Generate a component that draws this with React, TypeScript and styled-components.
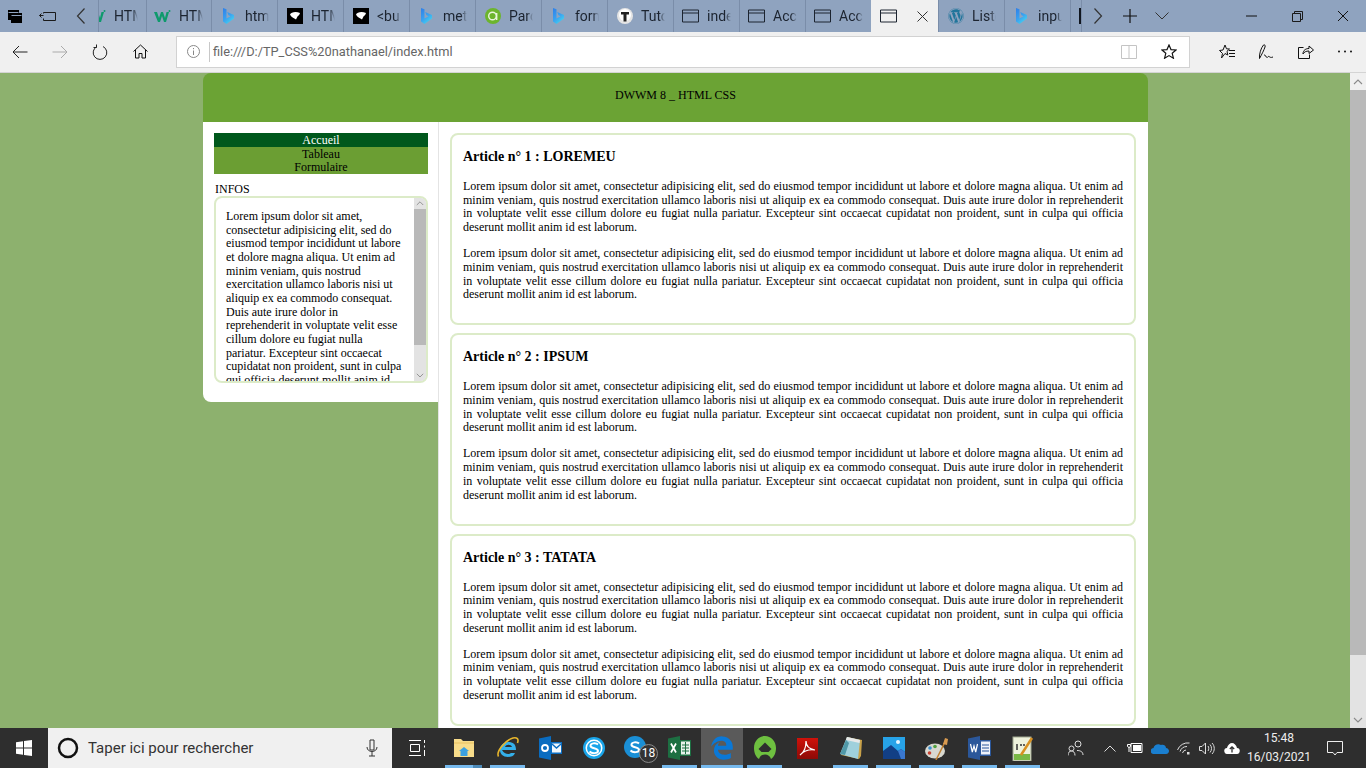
import * as React from 'react';
import styled, { createGlobalStyle } from 'styled-components';
import { FaWordpress, FaEdgeLegacy } from 'react-icons/fa';

const LOREM =
  'Lorem ipsum dolor sit amet, consectetur adipisicing elit, sed do eiusmod tempor incididunt ut labore et dolore magna aliqua. Ut enim ad minim veniam, quis nostrud exercitation ullamco laboris nisi ut aliquip ex ea commodo consequat. Duis aute irure dolor in reprehenderit in voluptate velit esse cillum dolore eu fugiat nulla pariatur. Excepteur sint occaecat cupidatat non proident, sunt in culpa qui officia deserunt mollit anim id est laborum.';

const GlobalStyle = createGlobalStyle`
  html, body {
    margin: 0;
    padding: 0;
    height: 768px;
    overflow: hidden;
  }
`;

const Screen = styled.div`
  width: 1366px;
  height: 768px;
  display: flex;
  flex-direction: column;
  font-family: Roboto, "Open Sans", sans-serif;
`;

/* browser chrome */
const TabBar = styled.div`
  height: 32px;
  flex: none;
  display: flex;
  background: #8fa3bf;
  color: #1c2430;
`;

const LeftTools = styled.div`
  width: 98px;
  flex: none;
  display: flex;
  align-items: center;
`;

const ChromeButton = styled.div<{ $w?: number }>`
  width: ${(p) => p.$w ?? 32}px;
  height: 100%;
  flex: none;
  display: flex;
  align-items: center;
  justify-content: center;
`;

const Tab = styled.div<{ $w?: number }>`
  width: ${(p) => p.$w ?? 66}px;
  flex: none;
  height: 32px;
  box-sizing: border-box;
  display: flex;
  align-items: center;
  justify-content: flex-end;
  gap: 8px;
  padding-right: 8px;
  overflow: hidden;
  border-left: 1px solid #7a8da9;
  font-size: 14px;
`;

const ActiveTab = styled.div`
  width: 67px;
  flex: none;
  height: 32px;
  box-sizing: border-box;
  display: flex;
  align-items: center;
  gap: 20px;
  padding-left: 9px;
  background: #f0f0f0;
`;

const TabIcon = styled.span`
  width: 17px;
  height: 17px;
  flex: none;
  display: flex;
  align-items: center;
  justify-content: center;
`;

const TabLabel = styled.span`
  width: 24px;
  flex: none;
  overflow: hidden;
  white-space: nowrap;
  -webkit-mask-image: linear-gradient(to right, #000 75%, transparent);
  mask-image: linear-gradient(to right, #000 75%, transparent);
`;

const Spacer = styled.div`
  flex: 1;
`;

const TabEnd = styled.div`
  width: 11px;
  flex: none;
  height: 32px;
  box-sizing: border-box;
  border-left: 1px solid #7a8da9;
  display: flex;
  align-items: center;
  justify-content: flex-end;
`;

const ScrollMark = styled.div`
  width: 2px;
  height: 16px;
  background: #10161f;
`;

const NextTabs = styled.div`
  width: 32px;
  flex: none;
  border-left: 1px solid #7a8da9;
  display: flex;
  align-items: center;
  justify-content: center;
`;

const ToolBar = styled.div`
  height: 41px;
  flex: none;
  box-sizing: border-box;
  display: flex;
  align-items: center;
  background: #f0f0f0;
  border-bottom: 1px solid #d4d4d4;
  padding-bottom: 1px;
`;

const NavIcons = styled.div`
  width: 176px;
  flex: none;
  display: flex;
`;

const NavButton = styled.div`
  width: 40px;
  height: 32px;
  display: flex;
  align-items: center;
  justify-content: center;
`;

const AddressBox = styled.div`
  width: 1014px;
  height: 32px;
  box-sizing: border-box;
  flex: none;
  display: flex;
  align-items: center;
  background: #fff;
  border: 1px solid #d2d2d2;
  color: #666;
  font-size: 12.8px;
`;

const InfoSlot = styled.div`
  width: 32px;
  height: 20px;
  flex: none;
  display: flex;
  align-items: center;
  justify-content: center;
  border-right: 1px solid #c8c8c8;
  margin-right: 3px;
`;

const AddressText = styled.span`
  flex: 1;
`;

const AddressAction = styled.div`
  width: 40px;
  display: flex;
  justify-content: center;
`;

const HubIcons = styled.div`
  flex: 1;
  display: flex;
  padding-left: 17px;
`;

const HubButton = styled.div`
  width: 39.5px;
  height: 32px;
  display: flex;
  align-items: center;
  justify-content: center;
`;

/* the page itself */
const PageArea = styled.div`
  flex: 1;
  min-height: 0;
  display: flex;
  background: #8db16e;
  font-family: "Liberation Serif", "Times New Roman", serif;
  color: #000;
  font-size: 12px;
  line-height: 13.67px;
`;

const Viewport = styled.div`
  flex: 1;
  min-width: 0;
  overflow: hidden;
`;

const Scrollbar = styled.div<{ $w: number }>`
  width: ${(p) => p.$w}px;
  flex: none;
  display: flex;
  flex-direction: column;
  background: #e3e3e3;
`;

const ScrollArrow = styled.div<{ $h: number; $bg: string }>`
  height: ${(p) => p.$h}px;
  flex: none;
  background: ${(p) => p.$bg};
  display: flex;
  align-items: center;
  justify-content: center;
`;

const ScrollThumb = styled.div<{ $h: number }>`
  height: ${(p) => p.$h}px;
  flex: none;
  background: #b9b9b9;
`;

const Wrapper = styled.div`
  width: 945px;
  margin-left: 203px;
  display: grid;
  grid-template-columns: 235px 1fr;
  grid-template-rows: 49px auto;
`;

const Header = styled.header`
  grid-column: 1 / 3;
  background: #6ba334;
  border-radius: 8px 8px 0 0;
  display: flex;
  align-items: center;
  justify-content: center;
  padding-bottom: 4px;
`;

const Sidebar = styled.aside`
  background: #fff;
  align-self: start;
  height: 280px;
  box-sizing: border-box;
  padding: 11px 10px 0 11px;
  border-radius: 0 0 0 8px;
`;

const Menu = styled.nav`
  display: flex;
  flex-direction: column;
  text-align: center;
`;

const MenuItem = styled.a<{ $current?: boolean }>`
  height: 13.67px;
  line-height: 15.6px;
  background: ${(p) => (p.$current ? '#00581c' : '#6b9e33')};
  color: ${(p) => (p.$current ? '#fff' : '#000')};
`;

const InfosTitle = styled.div`
  margin: 8px 0 0 1px;
  height: 14px;
  line-height: 15px;
`;

const InfosBox = styled.div`
  width: 214px;
  height: 187px;
  box-sizing: border-box;
  border: 2px solid #dcebc8;
  border-radius: 8px;
  overflow: hidden;
  display: flex;
  background: #fff;
`;

const InfosText = styled.div`
  flex: 1;
  min-width: 0;
  padding: 12px 10px 0;
`;

const Main = styled.main`
  background: #fff;
  border-left: 1px solid #e4e4e4;
  min-height: 671px;
  padding: 11px 12px 0 11px;
  display: flex;
  flex-direction: column;
  gap: 8px;
`;

const Article = styled.article`
  box-sizing: border-box;
  height: 192.3px;
  border: 2px solid #dcebc8;
  border-radius: 8px;
  padding: 14px 11px 0;
  text-align: justify;
`;

const ArticleTitle = styled.h2`
  margin: 0 0 15px;
  font-size: 14px;
  line-height: 16px;
  font-weight: bold;
`;

const Paragraph = styled.p`
  margin: 0 0 12.5px;
`;

/* taskbar */
const TaskBar = styled.div`
  height: 40px;
  flex: none;
  display: flex;
  background: #2e2e2e;
  color: #fff;
`;

const StartButton = styled.div`
  width: 48px;
  flex: none;
  display: flex;
  align-items: center;
  justify-content: center;
`;

const SearchBox = styled.div`
  width: 344px;
  flex: none;
  box-sizing: border-box;
  display: flex;
  align-items: center;
  background: #f0f0f0;
  color: #333;
  font-size: 15px;
  padding: 0 14px 0 9px;
  gap: 9px;
`;

const SearchText = styled.span`
  flex: 1;
`;

const TaskView = styled.div`
  width: 49px;
  flex: none;
  display: flex;
  align-items: center;
  justify-content: center;
`;

const AppSlot = styled.div<{ $w?: number; $running?: boolean; $active?: boolean }>`
  width: ${(p) => p.$w ?? 43}px;
  flex: none;
  position: relative;
  display: flex;
  align-items: center;
  justify-content: center;
  background: ${(p) => (p.$active ? '#5a5a5a' : 'transparent')};

  &::after {
    content: '';
    display: ${(p) => (p.$running ? 'block' : 'none')};
    position: absolute;
    left: ${(p) => (p.$active ? 0 : 4)}px;
    right: ${(p) => (p.$active ? 0 : 4)}px;
    bottom: 0;
    height: 3px;
    background: #76b9ed;
  }
`;

const StackedEdge = styled.span`
  position: absolute;
  right: 4px;
  bottom: 0;
  width: 9px;
  height: 3px;
  background: #4d8ab8;
  z-index: 1;
`;

const Badge = styled.span`
  position: absolute;
  right: 0;
  bottom: 5px;
  width: 19px;
  height: 19px;
  box-sizing: border-box;
  border-radius: 50%;
  border: 1px solid #8a8a8a;
  background: #333;
  color: #fff;
  font-size: 12px;
  line-height: 17px;
  text-align: center;
`;

const Tray = styled.div`
  flex: 1;
  display: flex;
  align-items: center;
  padding-left: 15px;
`;

const TrayIcon = styled.div<{ $w: number }>`
  width: ${(p) => p.$w}px;
  flex: none;
  display: flex;
  justify-content: center;
`;

const Clock = styled.div`
  width: 74px;
  flex: none;
  text-align: center;
  font-size: 12px;
  line-height: 19px;
  color: #eee;
`;

const Notify = styled.div`
  flex: 1;
  display: flex;
  justify-content: center;
  padding-right: 13px;
`;

/* favicons */
const BingIcon = () => (
  <svg width="11" height="16" viewBox="0 0 11 16">
    <defs>
      <linearGradient id="bing" x1="0" y1="0" x2="0.6" y2="1">
        <stop offset="0" stopColor="#2f7fe8" />
        <stop offset="0.6" stopColor="#3aa2f0" />
        <stop offset="1" stopColor="#45d0ee" />
      </linearGradient>
    </defs>
    <path d="M0 0l3.500 1.200v9.300l4-2.300-2-1L4.200 4 11 7v3.500L3.500 16 0 13.500z" fill="url(#bing)" />
  </svg>
);

const W3Icon = () => (
  <svg width="17" height="13" viewBox="0 0 17 13">
    <path d="M0 2h3l2 6 2-6h2l2 6 1.500-6H15l-3 10h-2L8 6l-2 6H4z" fill="#0e9a6c" />
    <circle cx="15.500" cy="1" r="1" fill="#0e9a6c" />
  </svg>
);

const PawIcon = () => (
  <svg width="16" height="16" viewBox="0 0 16 16">
    <rect width="16" height="16" fill="#000" />
    <path d="M3 6.500C4 4 9 3 13 5c-.5 2-1.500 2.500-2.500 3.500L9 11.500C7 10 4 9 3 6.500z" fill="#fff" />
  </svg>
);

const AltoIcon = () => (
  <svg width="16" height="16" viewBox="0 0 16 16">
    <circle cx="8" cy="8" r="8" fill="#6cb52d" />
    <circle cx="7.500" cy="8" r="3.800" fill="none" stroke="#e8f5dc" strokeWidth="1.400" />
    <rect x="11" y="5" width="1.400" height="7" fill="#e8f5dc" />
  </svg>
);

const TutoIcon = () => (
  <svg width="16" height="16" viewBox="0 0 16 16">
    <circle cx="8" cy="8" r="8" fill="#e4e4e4" />
    <circle cx="8" cy="7" r="6" fill="#fff" />
    <path d="M4 4h8v2.500H9.500v7h-3v-7H4z" fill="#222" />
  </svg>
);

const PageIcon = () => (
  <svg width="17" height="14" viewBox="0 0 17 14">
    <path d="M.5 1h16v12H.500zM.5 4h16" fill="none" stroke="#1c2430" />
  </svg>
);

const ChevronUp = ({ size }: { size: number }) => (
  <svg width={size} height={size * 0.6} viewBox="0 0 10 6">
    <path d="M1 5l4-4 4 4" fill="none" stroke="#8a8a8a" strokeWidth="1.100" />
  </svg>
);

const ChevronDown = ({ size }: { size: number }) => (
  <svg width={size} height={size * 0.6} viewBox="0 0 10 6">
    <path d="M1 1l4 4 4-4" fill="none" stroke="#8a8a8a" strokeWidth="1.100" />
  </svg>
);

type TabData = { icon: React.ReactNode; label: string; w?: number };

const tabs: TabData[] = [
  { icon: <W3Icon />, label: 'HTML', w: 48 },
  { icon: <W3Icon />, label: 'HTML', w: 65 },
  { icon: <BingIcon />, label: 'html' },
  { icon: <PawIcon />, label: 'HTML' },
  { icon: <PawIcon />, label: '<bu' },
  { icon: <BingIcon />, label: 'meta' },
  { icon: <AltoIcon />, label: 'Parc' },
  { icon: <BingIcon />, label: 'form' },
  { icon: <TutoIcon />, label: 'Tuto' },
  { icon: <PageIcon />, label: 'index' },
  { icon: <PageIcon />, label: 'Accu' },
  { icon: <PageIcon />, label: 'Accu' },
];

const line = { fill: 'none', stroke: '#1a1a1a', strokeWidth: 1 };

const SkypeS = ({ cy, color }: { cy: number; color: string }) => (
  <path
    d={`M15 ${cy - 3.500}C13 ${cy - 5.500} 7 ${cy - 5} 7.500 ${cy - 2}c.5 3 7.500 1.500 7.500 5 0 2.500-6 3-8.500.5`}
    fill="none"
    stroke={color}
    strokeWidth="2"
  />
);

const App = () => (
  <Screen>
    <GlobalStyle />
    <TabBar>
      <LeftTools>
        <ChromeButton $w={31}>
          <svg width="15" height="15" viewBox="0 0 15 15">
            <path d="M0 1h11v3h3v10H3v-3H0z" fill="#000" />
            <path d="M.5 3.500h10M3.500 6.500h10" stroke="#8fa3bf" />
          </svg>
        </ChromeButton>
        <ChromeButton $w={32}>
          <svg width="17" height="12" viewBox="0 0 17 12">
            <path d="M4.500 2.500h12v8h-12v-2M4.500 5.500h-4M2.500 3.500l-2 2 2 2M4.500 2.500v1" {...line} />
          </svg>
        </ChromeButton>
        <ChromeButton $w={35}>
          <svg width="10" height="16" viewBox="0 0 10 16">
            <path d="M8.500.5l-7 7.500 7 7.500" fill="none" stroke="#333" strokeWidth="1.200" />
          </svg>
        </ChromeButton>
      </LeftTools>
      {tabs.map((t, i) => (
        <Tab key={i} $w={t.w}>
          <TabIcon>{t.icon}</TabIcon>
          <TabLabel>{t.label}</TabLabel>
        </Tab>
      ))}
      <ActiveTab>
        <PageIcon />
        <svg width="11" height="11" viewBox="0 0 11 11">
          <path d="M.5.500l10 10M10.500.5l-10 10" stroke="#333" />
        </svg>
      </ActiveTab>
      <Tab>
        <TabIcon>
          <FaWordpress size={16} color="#21759b" />
        </TabIcon>
        <TabLabel>Liste</TabLabel>
      </Tab>
      <Tab>
        <TabIcon>
          <BingIcon />
        </TabIcon>
        <TabLabel>input</TabLabel>
      </Tab>
      <TabEnd>
        <ScrollMark />
      </TabEnd>
      <NextTabs>
        <svg width="10" height="16" viewBox="0 0 10 16">
          <path d="M1.500.5l7 7.500-7 7.500" fill="none" stroke="#333" strokeWidth="1.200" />
        </svg>
      </NextTabs>
      <ChromeButton>
        <svg width="14" height="14" viewBox="0 0 14 14">
          <path d="M7 0v14M0 7h14" stroke="#111" strokeWidth="1.200" />
        </svg>
      </ChromeButton>
      <ChromeButton>
        <svg width="14" height="8" viewBox="0 0 14 8">
          <path d="M.5.500L7 7 13.500.5" fill="none" stroke="#333" />
        </svg>
      </ChromeButton>
      <Spacer />
      <ChromeButton $w={46}>
        <svg width="11" height="2" viewBox="0 0 11 2">
          <path d="M0 1h11" stroke="#111" />
        </svg>
      </ChromeButton>
      <ChromeButton $w={46}>
        <svg width="11" height="11" viewBox="0 0 11 11">
          <path d="M.5 2.500h8v8h-8zM2.500 2.500v-2h8v8h-2" {...line} />
        </svg>
      </ChromeButton>
      <ChromeButton $w={46}>
        <svg width="12" height="12" viewBox="0 0 12 12">
          <path d="M1 1l10 10M11 1L1 11" stroke="#111" />
        </svg>
      </ChromeButton>
    </TabBar>

    <ToolBar>
      <NavIcons>
        <NavButton>
          <svg width="16" height="14" viewBox="0 0 16 14">
            <path d="M15.500 7H1M7 1L1 7l6 6" fill="none" stroke="#222" />
          </svg>
        </NavButton>
        <NavButton>
          <svg width="16" height="14" viewBox="0 0 16 14">
            <path d="M.5 7H15M9 1l6 6-6 6" fill="none" stroke="#aaa" />
          </svg>
        </NavButton>
        <NavButton>
          <svg width="16" height="16" viewBox="0 0 16 16">
            <path d="M5 2.500A6.800 6.800 0 1 0 11 2.500M4.500.5v3h-3" fill="none" stroke="#222" />
          </svg>
        </NavButton>
        <NavButton>
          <svg width="15" height="15" viewBox="0 0 15 15">
            <path d="M.5 7.500l7-6.500 7 6.500M2.500 6v8h3.500V9.500h3V14h3.500V6" fill="none" stroke="#111" />
          </svg>
        </NavButton>
      </NavIcons>
      <AddressBox>
        <InfoSlot>
          <svg width="13" height="13" viewBox="0 0 13 13">
            <circle cx="6.500" cy="6.500" r="6" fill="none" stroke="#888" />
            <path d="M6.500 5.500v4.500M6.500 3v1.200" stroke="#888" />
          </svg>
        </InfoSlot>
        <AddressText>file:///D:/TP_CSS%20nathanael/index.html</AddressText>
        <AddressAction>
          <svg width="16" height="14" viewBox="0 0 16 14">
            <path d="M.5.500h7.500v13H.500zM8 .5h7.500v13H8" fill="none" stroke="#c4c4c4" />
          </svg>
        </AddressAction>
        <AddressAction>
          <svg width="16" height="15" viewBox="0 0 16 15">
            <path d="M8 1l2 4.600 5 .4-3.800 3.300 1.200 4.900L8 11.600l-4.400 2.600 1.200-4.900L1 6l5-.4z" fill="none" stroke="#111" strokeWidth="1.200" />
          </svg>
        </AddressAction>
      </AddressBox>
      <HubIcons>
        <HubButton>
          <svg width="16" height="15" viewBox="0 0 16 15">
            <path d="M6 1l1.500 3.800 3 .2-2.500 2.300.8 3.700L6 9.500 2.500 14l1-4.500L.5 6.500l3.500-.5z" fill="none" stroke="#111" />
            <path d="M10 6.500h6M10 9.500h6M10 12.500h6" stroke="#111" />
          </svg>
        </HubButton>
        <HubButton>
          <svg width="16" height="16" viewBox="0 0 16 16">
            <path d="M1.500 14.500C1 10 3 4 5.500 1c1.500-.5 2 .5 1.500 2-1 3-3 7-5.500 11.500zM6 11c1-1 2 2.500 3 2.500s1-1.500 2-1 1.500 1.500 4 .5" fill="none" stroke="#111" />
          </svg>
        </HubButton>
        <HubButton>
          <svg width="16" height="15" viewBox="0 0 16 15">
            <path d="M5.500 3.500H.5v11h11v-4M5 10c0-4 3-5.500 6-5.500V2l4.500 4L11 9.500V7c-3 0-5 1-6 3z" fill="none" stroke="#111" />
          </svg>
        </HubButton>
        <HubButton>
          <svg width="16" height="3" viewBox="0 0 16 3">
            <circle cx="2" cy="1.500" r="1" fill="#111" />
            <circle cx="8" cy="1.500" r="1" fill="#111" />
            <circle cx="14" cy="1.500" r="1" fill="#111" />
          </svg>
        </HubButton>
      </HubIcons>
    </ToolBar>

    <PageArea>
      <Viewport>
        <Wrapper>
          <Header>DWWM 8 _ HTML CSS</Header>
          <Sidebar>
            <Menu>
              <MenuItem $current>Accueil</MenuItem>
              <MenuItem>Tableau</MenuItem>
              <MenuItem>Formulaire</MenuItem>
            </Menu>
            <InfosTitle>INFOS</InfosTitle>
            <InfosBox>
              <InfosText>{LOREM}</InfosText>
              <Scrollbar $w={12}>
                <ScrollArrow $h={11} $bg="#e3e3e3">
                  <ChevronUp size={8} />
                </ScrollArrow>
                <ScrollThumb $h={136} />
                <Spacer />
                <ScrollArrow $h={11} $bg="#e3e3e3">
                  <ChevronDown size={8} />
                </ScrollArrow>
              </Scrollbar>
            </InfosBox>
          </Sidebar>
          <Main>
            {['Article n° 1 : LOREMEU', 'Article n° 2 : IPSUM', 'Article n° 3 : TATATA'].map((title) => (
              <Article key={title}>
                <ArticleTitle>{title}</ArticleTitle>
                <Paragraph>{LOREM}</Paragraph>
                <Paragraph>{LOREM}</Paragraph>
              </Article>
            ))}
          </Main>
        </Wrapper>
      </Viewport>
      <Scrollbar $w={16}>
        <ScrollArrow $h={17} $bg="#f0f0f0">
          <ChevronUp size={10} />
        </ScrollArrow>
        <ScrollThumb $h={565} />
        <Spacer />
        <ScrollArrow $h={17} $bg="#e3e3e3">
          <ChevronDown size={10} />
        </ScrollArrow>
      </Scrollbar>
    </PageArea>

    <TaskBar>
      <StartButton>
        <svg width="16" height="16" viewBox="0 0 16 16">
          <path d="M0 2.300l7-1v6.200H0zM8 1.100L16 0v7.500H8zM0 8.500h7v6.200l-7-1zM8 8.500h8V16l-8-1.100z" fill="#fff" />
        </svg>
      </StartButton>
      <SearchBox>
        <svg width="22" height="22" viewBox="0 0 22 22">
          <circle cx="11" cy="11" r="9" fill="none" stroke="#111" strokeWidth="2.500" />
        </svg>
        <SearchText>Taper ici pour rechercher</SearchText>
        <svg width="12" height="18" viewBox="0 0 12 18">
          <path d="M4 1h4v10H4zM1 8c0 6 10 6 10 0M6 13v4M3 17h6" fill="none" stroke="#333" />
        </svg>
      </SearchBox>
      <TaskView>
        <svg width="16" height="16" viewBox="0 0 16 16">
          <path d="M0 .5h12M0 15.500h12M1.500 4.500h9v7h-9zM15.500 0v3M15.500 5.500v2M15.500 10v6" fill="none" stroke="#fff" />
        </svg>
      </TaskView>
      <AppSlot $running $w={45}>
        <svg width="22" height="20" viewBox="0 0 22 20">
          <path d="M1 1h7l2 2h11v16H1z" fill="#f8dc8a" />
          <path d="M1 5h20" stroke="#e8c060" />
          <path d="M6 13l5-4 5 4h-1.500v5h-7v-5z" fill="#3aa0e0" />
        </svg>
        <StackedEdge />
      </AppSlot>
      <AppSlot $running>
        <svg width="24" height="24" viewBox="0 0 24 24">
          <path d="M6 14h14c0-6-3-8-8-8s-8 4-8 8 3 7 8 7c3 0 6-1 7-4h-4c-2 2-7 1-9-3zM9 11c1-3 6-3 7 0z" fill="#34b0ea" fillRule="evenodd" />
          <path d="M2.500 20.500C0 16 8 5 17 2c4-1 6 1 4.500 5" fill="none" stroke="#e8b62c" strokeWidth="1.600" />
        </svg>
      </AppSlot>
      <AppSlot>
        <svg width="23" height="24" viewBox="0 0 23 24">
          <path d="M0 2.500L12 0v24L0 21.500z" fill="#0a6cc0" />
          <rect x="12" y="6" width="11" height="12" fill="#0a6cc0" />
          <path d="M13 7.500h9v9h-9z" fill="#f2f7fc" />
          <circle cx="6" cy="12" r="3" fill="none" stroke="#fff" strokeWidth="1.800" />
          <path d="M13 8l4.500 4 4.500-4" fill="none" stroke="#0a6cc0" strokeWidth="1.400" />
        </svg>
      </AppSlot>
      <AppSlot>
        <svg width="22" height="24" viewBox="0 0 22 24">
          <circle cx="11" cy="12" r="11" fill="#19a5ea" />
          <circle cx="11" cy="12" r="8.500" fill="#fff" />
          <circle cx="11" cy="12" r="7" fill="#19a5ea" />
          <SkypeS cy={12} color="#fff" />
        </svg>
      </AppSlot>
      <AppSlot>
        <svg width="22" height="24" viewBox="0 0 22 24" style={{ marginRight: 4 }}>
          <circle cx="11" cy="11" r="11" fill="#1a8fd6" />
          <SkypeS cy={11} color="#fff" />
        </svg>
        <Badge>18</Badge>
      </AppSlot>
      <AppSlot $running>
        <svg width="23" height="24" viewBox="0 0 23 24">
          <path d="M0 2.500L12 0v24L0 21.500z" fill="#1d6f42" />
          <rect x="12" y="4" width="11" height="16" fill="#1d6f42" />
          <rect x="13" y="5.500" width="9" height="13" fill="#e9f2ec" />
          <path d="M14 9h7M14 12h7M14 15h7M17.500 6v12" stroke="#1d6f42" />
          <path d="M3 7.500l5 9M8 7.500l-5 9" stroke="#fff" strokeWidth="1.700" />
        </svg>
      </AppSlot>
      <AppSlot $running $active $w={42}>
        <FaEdgeLegacy size={24} color="#0a78d7" />
      </AppSlot>
      <AppSlot $running>
        <svg width="22" height="24" viewBox="0 0 22 24">
          <path d="M11 0c6 0 11 5 11 12 0 5-2 9-5 11-1-3-3-4.500-6-4.500S6 20 5 23c-3-2-5-6-5-11C0 5 5 0 11 0z" fill="#6ec040" />
          <path d="M11 6.500l6.500 6.500-3 3h-7l-3-3z" fill="#2e2e2e" />
        </svg>
      </AppSlot>
      <AppSlot>
        <svg width="21" height="21" viewBox="0 0 21 21">
          <defs>
            <linearGradient id="pdf" x1="0" y1="0" x2="0" y2="1">
              <stop offset="0" stopColor="#d0120a" />
              <stop offset="1" stopColor="#8c0a06" />
            </linearGradient>
          </defs>
          <rect width="21" height="21" fill="url(#pdf)" />
          <path d="M3 17c5-3 6-9 6-14 0 5 3 8 9 9-6-1-11 1-15 5z" fill="none" stroke="#fff" strokeWidth="1.200" />
        </svg>
      </AppSlot>
      <AppSlot $running>
        <svg width="24" height="24" viewBox="0 0 24 24">
          <path d="M8 1l15 3-1 16-2 3-18-4z" fill="#c9a24a" />
          <path d="M8 1l13 3-2 19-18-5z" fill="#9fd0dc" />
          <path d="M8 1l13 3-.5 3L7 4z" fill="#e8e8e8" />
          <path d="M1 18l6-14 3 3-4 12z" fill="#4f98a8" />
        </svg>
      </AppSlot>
      <AppSlot $running>
        <svg width="22" height="22" viewBox="0 0 22 22">
          <rect width="22" height="22" fill="#27a3e8" />
          <path d="M0 22v-8l8-6 7 6 3-2 4 3v7z" fill="#123f85" />
          <path d="M15 14l3-2 4 3v7h-4z" fill="#3a78d0" />
          <circle cx="15" cy="5" r="2" fill="#e6f6ff" />
        </svg>
      </AppSlot>
      <AppSlot $running>
        <svg width="24" height="24" viewBox="0 0 24 24">
          <ellipse cx="10" cy="15" rx="10" ry="7.500" fill="#d8d8d0" />
          <circle cx="5" cy="12" r="1.800" fill="#3a8fd0" />
          <circle cx="10" cy="10.500" r="1.800" fill="#50a040" />
          <circle cx="4.500" cy="17" r="1.800" fill="#c84030" />
          <path d="M11 24L20 6" stroke="#c08030" strokeWidth="1.500" />
          <path d="M18 8l2-6 3 1-1 6z" fill="#d89a50" />
        </svg>
      </AppSlot>
      <AppSlot $running>
        <svg width="23" height="24" viewBox="0 0 23 24">
          <path d="M0 2.500L12 0v24L0 21.500z" fill="#2b579a" />
          <rect x="12" y="4" width="11" height="16" fill="#2b579a" />
          <rect x="13" y="5.500" width="9" height="13" fill="#eef2f9" />
          <path d="M14 9h7M14 12h7M14 15h7" stroke="#2b579a" />
          <path d="M2.500 8l1.800 8 1.700-6 1.700 6 1.800-8" fill="none" stroke="#fff" strokeWidth="1.200" />
        </svg>
      </AppSlot>
      <AppSlot $running>
        <svg width="22" height="26" viewBox="0 0 22 26">
          <rect x="1" y="2" width="18" height="24" fill="#eef2dc" stroke="#a0a890" />
          <rect x="2" y="19" width="16" height="6" fill="#79b845" />
          <path d="M5 9v6M8 10h2M11 10h2" stroke="#333" strokeWidth="1.500" />
          <path d="M9 20L20 3" stroke="#d89020" strokeWidth="2.500" />
        </svg>
      </AppSlot>
      <Tray>
        <TrayIcon $w={34}>
          <svg width="16" height="16" viewBox="0 0 16 16">
            <path d="M0 15.500c0-3 1.500-4.500 3.500-4.500S7 12.500 7 15.500M9 10.500c3 0 6 1 6 4.500M3.500 11a2.500 2.500 0 1 0 0-5 2.500 2.500 0 0 0 0 5zM10 7a3 3 0 1 0 0-6 3 3 0 0 0 0 6z" fill="none" stroke="#ddd" />
          </svg>
        </TrayIcon>
        <TrayIcon $w={34}>
          <svg width="12" height="7" viewBox="0 0 12 7">
            <path d="M.5 6.500L6 1l5.500 5.500" fill="none" stroke="#ddd" />
          </svg>
        </TrayIcon>
        <TrayIcon $w={16}>
          <svg width="16" height="12" viewBox="0 0 16 12">
            <path d="M.5 2.500h3v2c0 1-3 1-3 0zM2 5v5M4 1.500h11v9H4z" fill="none" stroke="#fff" />
            <rect x="6" y="3" width="8" height="6" fill="#fff" />
          </svg>
        </TrayIcon>
        <TrayIcon $w={34}>
          <svg width="18" height="11" viewBox="0 0 18 11">
            <path d="M3 11a3 3 0 0 1-.5-6C3 2 7 0 10 2c3-1 5 1 5 3 2 0 3 2 3 3s-1 3-3 3z" fill="#1a7fd0" />
          </svg>
        </TrayIcon>
        <TrayIcon $w={15}>
          <svg width="15" height="13" viewBox="0 0 15 13">
            <path d="M.5 8a11 11 0 0 1 12-7M3 9.500a7.500 7.500 0 0 1 7-5M5.500 11a4 4 0 0 1 3.500-3" fill="none" stroke="#ddd" />
            <rect x="10" y="10" width="2.500" height="2.500" fill="#ddd" />
          </svg>
        </TrayIcon>
        <TrayIcon $w={30}>
          <svg width="16" height="13" viewBox="0 0 16 13">
            <path d="M.5 4.500h2.500L6.500 1v11L3 8.500H.500zM9 4c1 1 1 4 0 5M11 2.500c2 2 2 6 0 8M13 1c3 3 3 8 0 11" fill="none" stroke="#ddd" />
          </svg>
        </TrayIcon>
        <TrayIcon $w={20}>
          <svg width="16" height="11" viewBox="0 0 16 11">
            <path d="M3.500 11a3 3 0 0 1-.5-6c.5-3 3-5 5-5s4.500 2 5 5a3 3 0 0 1-.5 6z" fill="#fff" />
            <path d="M8 9.500V4M5.800 6L8 3.800 10.200 6" fill="none" stroke="#2e2e2e" strokeWidth="1.300" />
          </svg>
        </TrayIcon>
        <Clock>
          15:48
          <br />
          16/03/2021
        </Clock>
        <Notify>
          <svg width="16" height="15" viewBox="0 0 16 15">
            <path d="M.5.500h15v11H10L8 14l-2-2.500H.500z" fill="none" stroke="#eee" />
          </svg>
        </Notify>
      </Tray>
    </TaskBar>
  </Screen>
);

export default App;
